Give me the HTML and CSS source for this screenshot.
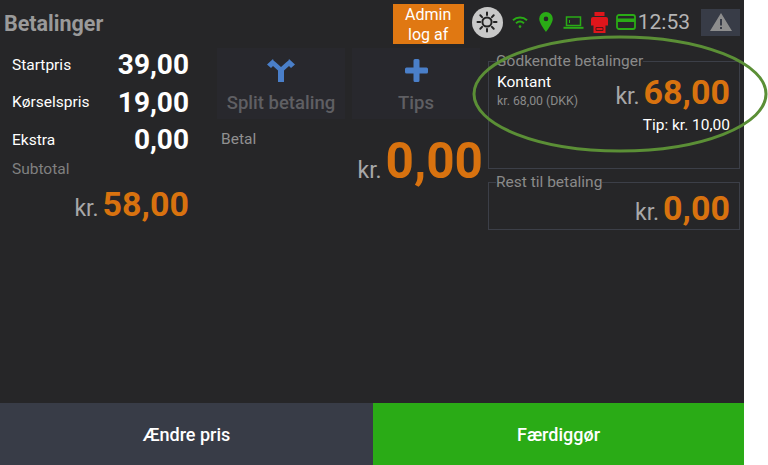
FILE: index.html
```html
<!DOCTYPE html>
<html>
<head>
<meta charset="utf-8"/>
<title>Betalinger</title>
<link rel="stylesheet" href="styles.css">
</head>
<body>
<div class="g-app">
    <div class="g-head">
        <h1>Betalinger</h1>
        <a class="u-admin">Admin<br>log af</a>
        <span class="u-sun">
            <svg width="24" height="24" viewBox="0 0 24 24" fill="none" stroke="#222" stroke-width="2" stroke-linecap="round">
                <circle cx="12" cy="12" r="4.6"/>
                <path d="M12 2.5v2.6M12 18.9v2.6M2.5 12h2.6M18.9 12h2.6M5.3 5.3l1.8 1.8M16.9 16.9l1.8 1.8M5.3 18.7l1.8-1.8M16.9 7.1l1.8-1.8"/>
            </svg>
        </span>
        <!-- status icons -->
        <svg class="u-ico-wifi" width="16" height="14" viewBox="0 0 16 14" fill="none" stroke="#2aab16" stroke-width="2">
            <path d="M1 5.2c4-3.6 10-3.6 14 0"/>
            <path d="M4 8.2c2.4-2 5.6-2 8 0"/>
            <circle cx="8" cy="11.6" r="1.3" fill="#2aab16" stroke="none"/>
        </svg>
        <svg class="u-ico-pin" width="14" height="20" viewBox="0 0 14 20">
            <path fill="#2aab16" fill-rule="evenodd" d="M7 0a6.8 6.8 0 0 1 6.8 6.8C13.800 11.500 7 20 7 20S.2 11.500.2 6.800A6.800 6.800 0 0 1 7 0zm0 4.600a2.300 2.300 0 1 0 0 4.600 2.300 2.300 0 0 0 0-4.600z"/>
        </svg>
        <svg class="u-ico-laptop" width="21" height="13" viewBox="0 0 21 13" fill="none" stroke="#2aab16" stroke-width="1.500">
            <path d="M3.500 1h14v8.500h-14z"/>
            <path d="M.5 11.800h20" stroke-width="2"/>
            <path d="M6.500 4v3" stroke-width="1"/>
        </svg>
        <svg class="u-ico-printer" width="17" height="21" viewBox="0 0 17 21">
            <path fill="#e0151b" d="M3.500 0h10v4h-10zM2 5h13a2 2 0 0 1 2 2v6.500h-2.500V21h-12v-7.500H0V7a2 2 0 0 1 2-2z"/>
            <path fill="none" stroke="#5b1216" d="M5 15.500h7v3H5z"/>
        </svg>
        <svg class="u-ico-card" width="20" height="16" viewBox="0 0 20 16">
            <rect x="1" y="1" width="18" height="14" rx="2" fill="none" stroke="#2aab16" stroke-width="1.800"/>
            <rect x="1" y="4.500" width="18" height="3.500" fill="#2aab16"/>
        </svg>
        <span class="u-time">12:53</span>
        <span class="u-warn">
            <svg width="22" height="18" viewBox="0 0 22 18">
                <path fill="#8d8d8d" fill-rule="evenodd" d="M11 0l11 18H0zM10 6v6.500h2V6zm0 8v2h2v-2z"/>
            </svg>
        </span>
    </div>

    <div class="g-con">
        <div class="g-in-l">
            <div class="m-line"><label>Startpris</label><b>39,00</b></div>
            <div class="m-line"><label>Kørselspris</label><b>19,00</b></div>
            <div class="m-line"><label>Ekstra</label><b>0,00</b></div>
            <p class="u-sub">Subtotal</p>
            <p class="u-sum"><i>kr.</i><b>58,00</b></p>
        </div>
        <div class="g-in-m">
            <div class="m-btns">
                <a class="u-btn">
                    <svg width="28" height="23" viewBox="0 0 28 23">
                        <path fill="#4a7fc9" d="M6 0L0 5.500 4 9l2-2 5 4.500V23h6V11.500l5-4.500 2 2 4-3.500L22 0l-.5 1.500-2.500 2L14 8 9 3.500 6.500 1.500z"/>
                    </svg>
                    Split betaling
                </a>
                <a class="u-btn">
                    <svg width="23" height="23" viewBox="0 0 23 23">
                        <path fill="#4a7fc9" d="M8.500 1.500Q8.500 0 10 0h3q1.500 0 1.500 1.500v7h7q1.500 0 1.500 1.500v3q0 1.500-1.500 1.500h-7v7Q14.500 23 13 23h-3q-1.500 0-1.500-1.500v-7h-7Q0 14.500 0 13v-3q0-1.500 1.500-1.500h7z"/>
                    </svg>
                    Tips
                </a>
            </div>
            <p class="u-betal">Betal</p>
            <p class="u-total"><i>kr.</i><b>0,00</b></p>
        </div>
        <div class="g-in-r">
            <fieldset class="m-box m-box-paid">
                <legend>Godkendte betalinger</legend>
                <div class="m-pay">
                    <div class="m-pay-l">
                        <strong>Kontant</strong>
                        <small>kr. 68,00 (DKK)</small>
                    </div>
                    <p class="u-amount"><i>kr.</i><b>68,00</b></p>
                </div>
                <p class="u-tip">Tip: kr. 10,00</p>
            </fieldset>
            <fieldset class="m-box m-box-rest">
                <legend>Rest til betaling</legend>
                <p class="u-amount"><i>kr.</i><b>0,00</b></p>
            </fieldset>
        </div>
    </div>

    <div class="g-foot">
        <a class="u-foot u-foot-gray">Ændre pris</a>
        <a class="u-foot u-foot-green">Færdiggør</a>
    </div>
</div>
<!-- highlight ring drawn over the screen -->
<svg class="u-ring" width="298" height="120" viewBox="0 0 298 120" fill="none">
    <ellipse cx="148" cy="59" rx="146" ry="57" stroke="#5b8f36" stroke-width="3"/>
</svg>
</body>
</html>
```
FILE: styles.css
```css
/* reset */
html,body,h1,p,fieldset,legend{margin:0;padding:0;}
body{width:768px;height:465px;overflow:hidden;background-color:#fff;position:relative;font-family:Roboto,"Liberation Sans",sans-serif;color:#fff;}
i{font-style:normal;}
svg{display:block;flex:none;}

.g-app{width:744px;height:465px;background-color:#262628;display:flex;flex-direction:column;}

/* head */
.g-head{height:40px;display:flex;align-items:center;padding:4px 4px 0 5px;box-sizing:border-box;}
.g-head h1{flex:1;font-size:21.500px;font-weight:700;color:#9a9a9a;padding-top:3px;margin-left:-1px;}
.u-admin{width:71px;height:40px;margin-top:4px;padding-top:1px;box-sizing:border-box;background-color:#e07812;font-size:16px;line-height:20px;text-align:center;}
.u-sun{width:31px;height:31px;margin-left:8px;border-radius:50%;background-color:#c8c8c8;display:flex;align-items:center;justify-content:center;}
.u-ico-wifi{margin-left:9px;}
.u-ico-pin{margin-left:11px;}
.u-ico-laptop{margin-left:10px;}
.u-ico-printer{margin-left:7px;}
.u-ico-card{margin-left:8px;}
.u-time{margin-left:2px;font-size:21px;color:#b4b4b4;}
.u-warn{width:39px;height:27px;margin-left:11px;background-color:#383c47;display:flex;align-items:center;justify-content:center;}

/* content */
.g-con{flex:1;display:flex;min-height:0;}
.g-in-l{width:177px;padding:6px 0 0 12px;flex:none;}
.m-line{height:37.500px;display:flex;align-items:center;justify-content:space-between;}
.m-line label{font-size:15.500px;}
.m-line b{font-size:28px;font-weight:700;}
.u-sub{font-size:15.500px;color:#808080;line-height:20px;}
.u-sum{text-align:right;margin-top:5px;line-height:40px;}
.u-sum i,.u-total i,.u-amount i{color:#a8a8a8;font-size:23px;margin-right:4px;}
.u-sum b,.u-total b,.u-amount b{color:#d8720f;font-size:34px;font-weight:700;}

.g-in-m{width:266px;margin-left:28px;flex:none;}
.m-btns{display:flex;gap:7px;margin-top:8px;}
.u-btn{width:128px;height:71px;background-color:#28282d;display:flex;flex-direction:column;align-items:center;padding-top:11px;box-sizing:border-box;gap:10px;font-size:18.500px;font-weight:500;color:#5f5f63;}
.u-betal{margin:11px 0 0 4px;font-size:15.500px;color:#909090;line-height:18px;}
.u-total{text-align:right;line-height:56px;margin-top:-15px;}
.u-total b{font-size:49.500px;}

.g-in-r{width:252px;margin-left:5px;flex:none;}
.m-box{border:1px solid #3c3f48;margin:0;padding:0 9px 0 8px;width:252px;box-sizing:border-box;}
.m-box legend{font-size:15.500px;color:#8a8a8a;padding:0;margin-left:-1px;line-height:18px;}
.m-box-paid{height:117px;margin-top:12px;}
.m-box-rest{height:57px;margin-top:4px;}
.m-pay{display:flex;justify-content:space-between;align-items:flex-start;padding-top:2px;}
.m-pay-l strong{display:block;font-size:15.500px;font-weight:400;line-height:20px;}
.m-pay-l small{display:block;font-size:12.300px;color:#8a8a8a;line-height:18px;}
.u-amount{text-align:right;line-height:40px;}
.m-box-rest .u-amount{margin-top:-3px;}
.u-tip{text-align:right;font-size:15.500px;line-height:20px;margin-top:-4px;}

/* foot */
.g-foot{height:62px;display:flex;}
.u-foot{display:flex;align-items:center;justify-content:center;font-size:18px;font-weight:500;}
.u-foot-gray{width:373px;background-color:#383c47;}
.u-foot-green{width:371px;background-color:#2aab16;}

.u-ring{position:absolute;left:472px;top:35px;}
```
